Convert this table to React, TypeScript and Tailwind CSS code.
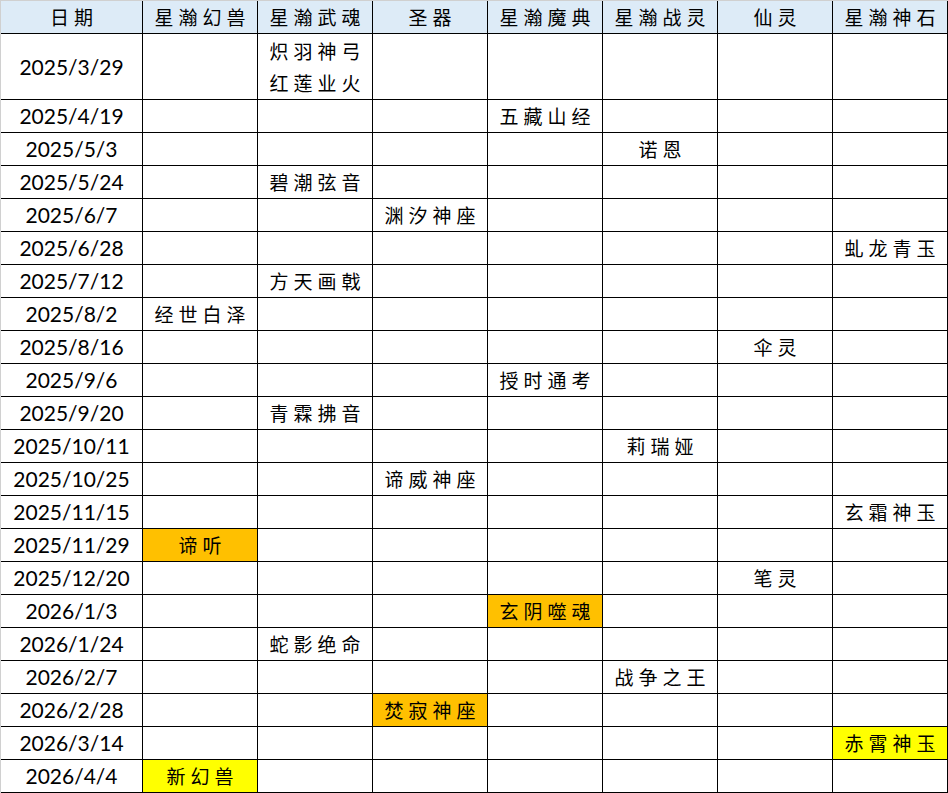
const headers = ["星瀚幻兽", "星瀚武魂", "圣器", "星瀚魔典", "星瀚战灵", "仙灵", "星瀚神石"];

type Row = {
  date: string;
  col: number;
  text: string[];
  fill?: "orange" | "yellow";
  tall?: boolean;
};

const rows: Row[] = [
  { date: "2025/3/29", col: 1, text: ["炽羽神弓", "红莲业火"], tall: true },
  { date: "2025/4/19", col: 3, text: ["五藏山经"] },
  { date: "2025/5/3", col: 4, text: ["诺恩"] },
  { date: "2025/5/24", col: 1, text: ["碧潮弦音"] },
  { date: "2025/6/7", col: 2, text: ["渊汐神座"] },
  { date: "2025/6/28", col: 6, text: ["虬龙青玉"] },
  { date: "2025/7/12", col: 1, text: ["方天画戟"] },
  { date: "2025/8/2", col: 0, text: ["经世白泽"] },
  { date: "2025/8/16", col: 5, text: ["伞灵"] },
  { date: "2025/9/6", col: 3, text: ["授时通考"] },
  { date: "2025/9/20", col: 1, text: ["青霖拂音"] },
  { date: "2025/10/11", col: 4, text: ["莉瑞娅"] },
  { date: "2025/10/25", col: 2, text: ["谛威神座"] },
  { date: "2025/11/15", col: 6, text: ["玄霜神玉"] },
  { date: "2025/11/29", col: 0, text: ["谛听"], fill: "orange" },
  { date: "2025/12/20", col: 5, text: ["笔灵"] },
  { date: "2026/1/3", col: 3, text: ["玄阴噬魂"], fill: "orange" },
  { date: "2026/1/24", col: 1, text: ["蛇影绝命"] },
  { date: "2026/2/7", col: 4, text: ["战争之王"] },
  { date: "2026/2/28", col: 2, text: ["焚寂神座"], fill: "orange" },
  { date: "2026/3/14", col: 6, text: ["赤霄神玉"], fill: "yellow" },
  { date: "2026/4/4", col: 0, text: ["新幻兽"], fill: "yellow" },
];

const cjk = "font-['Noto_Sans_CJK_SC',sans-serif] text-[19px] tracking-[5px] pl-[5px] text-black";

export default function App() {
  return (
    <div className="w-[948px] h-[793px] bg-white overflow-hidden">
      <div className="grid grid-cols-[142px_repeat(7,115px)] border-l border-t border-[#d0d0d0]">
        <div className={`h-[33px] bg-[#ddebf7] border-r border-b border-black flex items-center justify-center ${cjk}`}>
          日期
        </div>
        {headers.map((h) => (
          <div
            key={h}
            className={`h-[33px] bg-[#ddebf7] border-r border-b border-black flex items-center justify-center ${cjk}`}
          >
            {h}
          </div>
        ))}
        {rows.map((r) => (
          <Line key={r.date} row={r} />
        ))}
      </div>
    </div>
  );
}

function Line({ row }: { row: Row }) {
  const h = row.tall ? "h-[66px]" : "h-[33px]";
  return (
    <>
      <div
        className={`${h} border-r border-b border-black flex items-center justify-center font-['Lato',sans-serif] text-[21px] text-black`}
      >
        {row.date}
      </div>
      {headers.map((_, i) => {
        const hit = i === row.col;
        const bg = hit && row.fill === "orange" ? "bg-[#ffc000]" : hit && row.fill === "yellow" ? "bg-[#ffff00]" : "bg-white";
        return (
          <div
            key={i}
            className={`${h} ${bg} border-r border-b border-black flex flex-col items-center justify-center leading-[32px] ${cjk}`}
          >
            {hit && row.text.map((t) => <span key={t}>{t}</span>)}
          </div>
        );
      })}
    </>
  );
}
